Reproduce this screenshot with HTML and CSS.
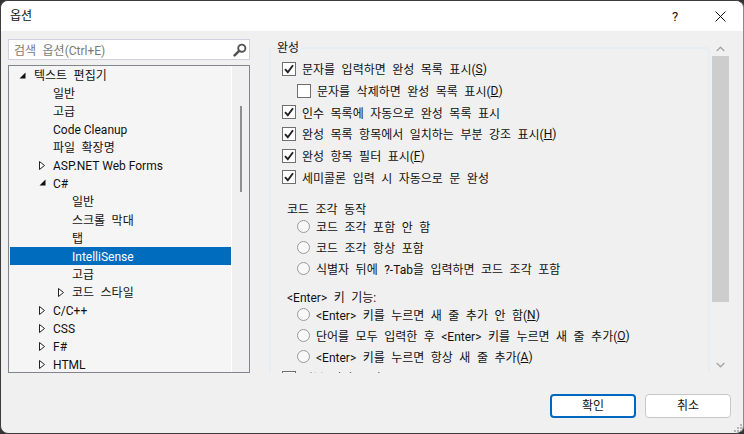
FILE: index.html
```html
<!DOCTYPE html>
<html lang="ko">
<head>
<meta charset="utf-8">
<title>옵션</title>
<link rel="stylesheet" href="styles.css">
</head>
<body>
<div class="window">
  <header class="titlebar">
    <span class="title">옵션</span>
    <span class="help">?</span>
    <svg class="close" width="11" height="11" viewBox="0 0 11 11"><path d="M.5.5l10 10M10.5.5l-10 10" stroke="#111" stroke-width="1" fill="none"/></svg>
  </header>
  <main class="content">
    <section class="left">
      <div class="search">
        <span class="placeholder">검색 옵션(Ctrl+E)</span>
        <svg width="14" height="14" viewBox="0 0 14 14"><circle cx="8.8" cy="5.2" r="3.6" fill="none" stroke="#555" stroke-width="1.9"/><path d="M6.2 7.8L1.6 12.4" stroke="#555" stroke-width="2.6" stroke-linecap="round"/></svg>
      </div>
      <div class="tree">
        <div class="tree-list">
          <div class="row l0"><svg class="arrow" width="7" height="7" viewBox="0 0 7 7"><path d="M6.5.5v6h-6z" fill="#111"/></svg>텍스트 편집기</div>
          <div class="row l1">일반</div>
          <div class="row l1">고급</div>
          <div class="row l1 latin">Code Cleanup</div>
          <div class="row l1">파일 확장명</div>
          <div class="row l1 latin"><svg class="arrow" width="6" height="9" viewBox="0 0 6 9"><path d="M.5.5l5 4-5 4z" fill="#fff" stroke="#222"/></svg>ASP.NET Web Forms</div>
          <div class="row l1"><svg class="arrow" width="7" height="7" viewBox="0 0 7 7"><path d="M6.5.5v6h-6z" fill="#111"/></svg>C#</div>
          <div class="row l2">일반</div>
          <div class="row l2">스크롤 막대</div>
          <div class="row l2">탭</div>
          <div class="row l2 selected">IntelliSense</div>
          <div class="row l2">고급</div>
          <div class="row l2"><svg class="arrow" width="6" height="9" viewBox="0 0 6 9"><path d="M.5.5l5 4-5 4z" fill="#fff" stroke="#222"/></svg>코드 스타일</div>
          <div class="row l1"><svg class="arrow" width="6" height="9" viewBox="0 0 6 9"><path d="M.5.5l5 4-5 4z" fill="#fff" stroke="#222"/></svg>C/C++</div>
          <div class="row l1"><svg class="arrow" width="6" height="9" viewBox="0 0 6 9"><path d="M.5.5l5 4-5 4z" fill="#fff" stroke="#222"/></svg>CSS</div>
          <div class="row l1"><svg class="arrow" width="6" height="9" viewBox="0 0 6 9"><path d="M.5.5l5 4-5 4z" fill="#fff" stroke="#222"/></svg>F#</div>
          <div class="row l1"><svg class="arrow" width="6" height="9" viewBox="0 0 6 9"><path d="M.5.5l5 4-5 4z" fill="#fff" stroke="#222"/></svg>HTML</div>
        </div>
        <div class="tree-scroll"><div class="tree-thumb"></div></div>
      </div>
    </section>
    <section class="pane">
      <div class="pane-body">
        <fieldset class="group">
          <legend>완성</legend>
          <div class="check-row"><span class="box"><svg width="10" height="10" viewBox="0 0 10 10"><path d="M1 5.2l2.8 3L9 1.2" fill="none" stroke="#222" stroke-width="1.9"/></svg></span>문자를 입력하면 완성 목록 표시(<u>S</u>)</div>
          <div class="check-row sub"><span class="box"></span>문자를 삭제하면 완성 목록 표시(<u>D</u>)</div>
          <div class="check-row"><span class="box"><svg width="10" height="10" viewBox="0 0 10 10"><path d="M1 5.2l2.8 3L9 1.2" fill="none" stroke="#222" stroke-width="1.9"/></svg></span>인수 목록에 자동으로 완성 목록 표시</div>
          <div class="check-row"><span class="box"><svg width="10" height="10" viewBox="0 0 10 10"><path d="M1 5.2l2.8 3L9 1.2" fill="none" stroke="#222" stroke-width="1.9"/></svg></span>완성 목록 항목에서 일치하는 부분 강조 표시(<u>H</u>)</div>
          <div class="check-row"><span class="box"><svg width="10" height="10" viewBox="0 0 10 10"><path d="M1 5.2l2.8 3L9 1.2" fill="none" stroke="#222" stroke-width="1.9"/></svg></span>완성 항목 필터 표시(<u>F</u>)</div>
          <div class="check-row"><span class="box"><svg width="10" height="10" viewBox="0 0 10 10"><path d="M1 5.2l2.8 3L9 1.2" fill="none" stroke="#222" stroke-width="1.9"/></svg></span>세미콜론 입력 시 자동으로 문 완성</div>
          <div class="sub-title snippet">코드 조각 동작</div>
          <div class="radio-row"><span class="radio"></span>코드 조각 포함 안 함</div>
          <div class="radio-row"><span class="radio"></span>코드 조각 항상 포함</div>
          <div class="radio-row"><span class="radio"></span>식별자 뒤에 ?-Tab을 입력하면 코드 조각 포함</div>
          <div class="sub-title enter">&lt;Enter&gt; 키 기능:</div>
          <div class="radio-row"><span class="radio"></span>&lt;Enter&gt; 키를 누르면 새 줄 추가 안 함(<u>N</u>)</div>
          <div class="radio-row"><span class="radio"></span>단어를 모두 입력한 후 &lt;Enter&gt; 키를 누르면 새 줄 추가(<u>O</u>)</div>
          <div class="radio-row"><span class="radio"></span>&lt;Enter&gt; 키를 누르면 항상 새 줄 추가(<u>A</u>)</div>
          <div class="check-row last"><span class="box"></span>일부 편집 동작</div>
        </fieldset>
      </div>
      <div class="pane-scroll">
        <svg width="9" height="6" viewBox="0 0 9 6"><path d="M.7 5L4.5 1.2 8.3 5" fill="none" stroke="#a6a6a6" stroke-width="1.4"/></svg>
        <div class="pane-track"><div class="pane-thumb"></div></div>
        <svg width="9" height="6" viewBox="0 0 9 6"><path d="M.7 1L4.5 4.8 8.3 1" fill="none" stroke="#a6a6a6" stroke-width="1.4"/></svg>
      </div>
    </section>
  </main>
  <footer class="footer">
    <button class="btn primary" type="button">확인</button>
    <button class="btn" type="button">취소</button>
    <svg class="grip" width="8" height="8" viewBox="0 0 8 8"><path d="M6 0h2v2H6zM3 3h2v2H3zM6 3h2v2H6zM0 6h2v2H0zM3 6h2v2H3zM6 6h2v2H6z" fill="#b4b4b4"/></svg>
  </footer>
</div>
</body>
</html>
```

FILE: styles.css
```css
html, body {
  margin: 0;
  padding: 0;
  width: 744px;
  height: 434px;
  overflow: hidden;
  background: #333;
}
body, button {
  font-family: Roboto, "Noto Sans CJK KR", "Noto Sans", sans-serif;
  font-size: 12px;
  color: #111;
  word-spacing: 3.5px;
}
.window {
  box-sizing: border-box;
  width: 744px;
  height: 434px;
  display: flex;
  flex-direction: column;
  background: #f0f0f0;
  border: 1px solid #3c3c3c;
  border-right-color: #8a8a8a;
  border-radius: 8px;
  overflow: hidden;
  position: relative;
}
.titlebar {
  height: 30px;
  flex: none;
  background: #fff;
  display: flex;
  align-items: center;
  padding-left: 9px;
}
.title { flex: 1; line-height: 16px; }
.help { width: 12px; margin-right: 34px; font-size: 13px; text-align: center; }
.close { margin-right: 17px; }
.content {
  height: 342px;
  flex: none;
  display: flex;
  overflow: hidden;
}
.left {
  width: 242px;
  margin: 8px 0 0 7px;
  flex: none;
  display: flex;
  flex-direction: column;
  gap: 5px;
}
.search {
  box-sizing: border-box;
  height: 21px;
  flex: none;
  background: #fff;
  border: 1px solid #cfd0e0;
  display: flex;
  align-items: center;
  justify-content: space-between;
  padding: 0 2px 0 5px;
}
.placeholder { color: #7a7a7a; }
.tree {
  flex: 1;
  min-height: 0;
  box-sizing: border-box;
  border: 1px solid #82868c;
  background: #f5f5f5;
  display: flex;
  overflow: hidden;
}
.tree-list {
  width: 221px;
  margin-left: 1px;
  flex: none;
}
.row {
  position: relative;
  height: 18.07px;
  line-height: 20px;
  white-space: nowrap;
}
.latin { word-spacing: 0; }
.l0 { padding-left: 24px; }
.l1 { padding-left: 43px; }
.l2 { padding-left: 62px; }
.arrow { position: absolute; top: 5px; }
.l0 .arrow { left: 9px; top: 6px; }
.l1 .arrow { left: 29px; }
.l2 .arrow { left: 48px; }
.selected { background: #006cbe; color: #fff; }
.tree-scroll {
  flex: 1;
  background: #f0f0f0;
  border-left: 1px solid #fff;
  display: flex;
  justify-content: center;
  padding-top: 40px;
}
.tree-thumb {
  width: 2px;
  height: 86px;
  background: #8f8f8f;
}
.pane {
  flex: 1;
  min-width: 0;
  margin-left: 19px;
  display: flex;
  overflow: hidden;
}
.pane-body {
  width: 441px;
  flex: none;
  height: 342px;
  overflow: hidden;
}
.group {
  box-sizing: border-box;
  margin: 9px 0 0;
  padding: 2px 0 0 11px;
  height: 420px;
  border: 2px solid #e6edf3;
  border-radius: 4px;
  min-width: 0;
}
.group legend {
  margin-left: -7px;
  padding: 0 2px;
  line-height: 16px;
}
.check-row, .radio-row, .sub-title {
  display: flex;
  align-items: center;
  white-space: pre;
}
.check-row { height: 21.7px; }
.radio-row { height: 21px; padding-left: 15px; }
.sub { padding-left: 15px; }
.box {
  box-sizing: border-box;
  width: 14px;
  height: 14px;
  flex: none;
  margin-right: 6px;
  background: #fff;
  border: 1px solid #6f6f6f;
  display: flex;
  align-items: center;
  justify-content: center;
}
.radio {
  box-sizing: border-box;
  width: 13px;
  height: 13px;
  flex: none;
  margin-right: 6px;
  background: #f8f8f8;
  border: 1.5px solid #999;
  border-radius: 50%;
}
.sub-title { height: 16px; padding-left: 5px; }
.snippet { margin-top: 12px; }
.enter { margin-top: 9px; }
.last { margin-top: 0; }
.pane-scroll {
  width: 17px;
  margin-left: 2px;
  height: 342px;
  flex: none;
  display: flex;
  flex-direction: column;
  align-items: center;
  padding-top: 15px;
  box-sizing: border-box;
}
.pane-track { flex: 1; width: 17px; padding-top: 4px; box-sizing: border-box; }
.pane-thumb { height: 246px; background: #cdcdcd; }
.pane-scroll svg:last-child { margin-bottom: 5px; }
.footer {
  flex: 1;
  display: flex;
  justify-content: flex-end;
  gap: 9px;
  padding: 21px 12px 0 0;
}
.btn {
  box-sizing: border-box;
  width: 86px;
  height: 24px;
  background: #fff;
  border: 1px solid #c8c8c8;
  border-radius: 4px;
  padding: 0;
  line-height: 20px;
}
.primary { border: 2px solid #0067c0; }
.grip { position: absolute; right: 1px; bottom: 1px; }
```
